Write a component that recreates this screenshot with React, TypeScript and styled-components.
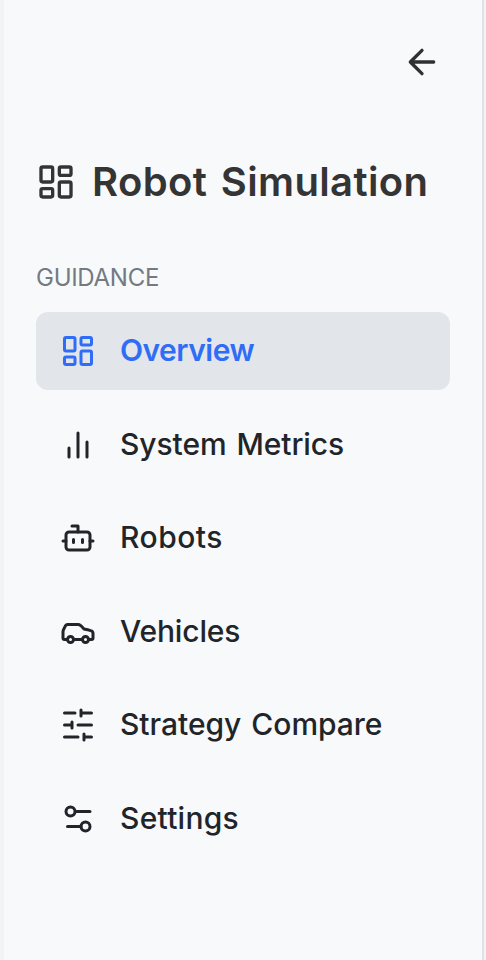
import React from 'react';
import styled, { createGlobalStyle } from 'styled-components';

const GlobalStyle = createGlobalStyle`
  * { box-sizing: border-box; }
  body { margin: 0; background: #f3f3f4; font-family: Inter, "Liberation Sans", sans-serif; }
`;

const Sidebar = styled.aside`
  width: 480px;
  height: 960px;
  margin-left: 4px;
  padding: 0 32px;
  background: #f8f9fb;
  border-right: 2px solid #dfe2e8;
  display: flex;
  flex-direction: column;
`;

const TopBar = styled.div`
  height: 124px;
  padding-right: 8px;
  display: flex;
  align-items: center;
  justify-content: flex-end;
`;

const BackButton = styled.button`
  width: 40px;
  height: 40px;
  padding: 0;
  border: 0;
  background: none;
  color: #303033;
  display: flex;
  align-items: center;
  justify-content: center;
`;

const Brand = styled.header`
  height: 116px;
  display: flex;
  align-items: center;
  gap: 16px;
  color: #343434;
`;

const Title = styled.h1`
  margin: 0;
  font-size: 40px;
  line-height: 48px;
  font-weight: 580;
  letter-spacing: 0.36px;
  word-spacing: 3.2px;
  white-space: nowrap;
`;

const SectionLabel = styled.div`
  height: 72px;
  padding-top: 20px;
  font-size: 24px;
  line-height: 36px;
  font-weight: 400;
  letter-spacing: -0.28px;
  color: #737a82;
`;

const Menu = styled.nav`
  display: flex;
  flex-direction: column;
  gap: 15.6px;
`;

const MenuItem = styled.a<{ $active?: boolean }>`
  height: 78px;
  padding: 0 24px;
  border-radius: 12px;
  display: flex;
  align-items: center;
  gap: 24px;
  background: ${(p) => (p.$active ? '#e2e5ea' : 'transparent')};
  color: ${(p) => (p.$active ? '#2f6df6' : '#212529')};
`;

const ItemText = styled.span<{ $active?: boolean; $spacing: number }>`
  padding-bottom: 2px;
  font-size: 30px;
  line-height: 40px;
  font-weight: ${(p) => (p.$active ? 600 : 500)};
  letter-spacing: ${(p) => p.$spacing}px;
  word-spacing: 2px;
  white-space: nowrap;
`;

const Icon = styled.svg<{ $size: number }>`
  width: ${(p) => p.$size}px;
  height: ${(p) => p.$size}px;
  flex: none;
  fill: none;
  stroke: currentColor;
  stroke-width: 2;
  stroke-linecap: round;
  stroke-linejoin: round;
`;

const dashboard = (
  <>
    <rect x="3" y="3" width="7" height="9" rx="1" />
    <rect x="14" y="3" width="7" height="5" rx="1" />
    <rect x="14" y="12" width="7" height="9" rx="1" />
    <rect x="3" y="16" width="7" height="5" rx="1" />
  </>
);

const items = [
  { label: 'Overview', spacing: -0.5, icon: dashboard },
  { label: 'System Metrics', spacing: -0.08, icon: <path d="M18 20V10M12 20V4M6 20v-6" /> },
  {
    label: 'Robots',
    spacing: 0.5,
    icon: (
      <>
        <path d="M12 8V4H8" />
        <rect x="4" y="8" width="16" height="12" rx="2" />
        <path d="M2 14h2M20 14h2M15 13v2M9 13v2" />
      </>
    ),
  },
  {
    label: 'Vehicles',
    spacing: -0.15,
    icon: (
      <>
        <path d="M19 17h2c.6 0 1-.4 1-1v-3c0-.9-.7-1.7-1.5-1.9C18.7 10.6 16 10 16 10s-1.3-1.4-2.2-2.3c-.5-.4-1.1-.7-1.8-.7H5c-.6 0-1.1.4-1.4.9l-1.4 2.9A3.7 3.7 0 0 0 2 12v4c0 .6.4 1 1 1h2" />
        <circle cx="7" cy="17" r="2" />
        <path d="M9 17h6" />
        <circle cx="17" cy="17" r="2" />
      </>
    ),
  },
  {
    label: 'Strategy Compare',
    spacing: -0.02,
    icon: <path d="M21 4h-7M10 4H3M21 12h-9M8 12H3M21 20h-5M12 20H3M14 2v4M8 10v4M16 18v4" />,
  },
  {
    label: 'Settings',
    spacing: 0.25,
    icon: (
      <>
        <path d="M20 7h-9M14 17H5" />
        <circle cx="17" cy="17" r="3" />
        <circle cx="7" cy="7" r="3" />
      </>
    ),
  },
];

export default function App() {
  return (
    <>
      <GlobalStyle />
      <Sidebar>
        <TopBar>
          <BackButton aria-label="Back">
            <Icon viewBox="0 0 24 24" $size={40}>
              <path d="m12 19-7-7 7-7M19 12H5" />
            </Icon>
          </BackButton>
        </TopBar>
        <Brand>
          <Icon viewBox="0 0 24 24" $size={40}>{dashboard}</Icon>
          <Title>Robot Simulation</Title>
        </Brand>
        <SectionLabel>GUIDANCE</SectionLabel>
        <Menu>
          {items.map((item, i) => (
            <MenuItem key={item.label} $active={i === 0}>
              <Icon viewBox="0 0 24 24" $size={36}>{item.icon}</Icon>
              <ItemText $active={i === 0} $spacing={item.spacing}>{item.label}</ItemText>
            </MenuItem>
          ))}
        </Menu>
      </Sidebar>
    </>
  );
}
